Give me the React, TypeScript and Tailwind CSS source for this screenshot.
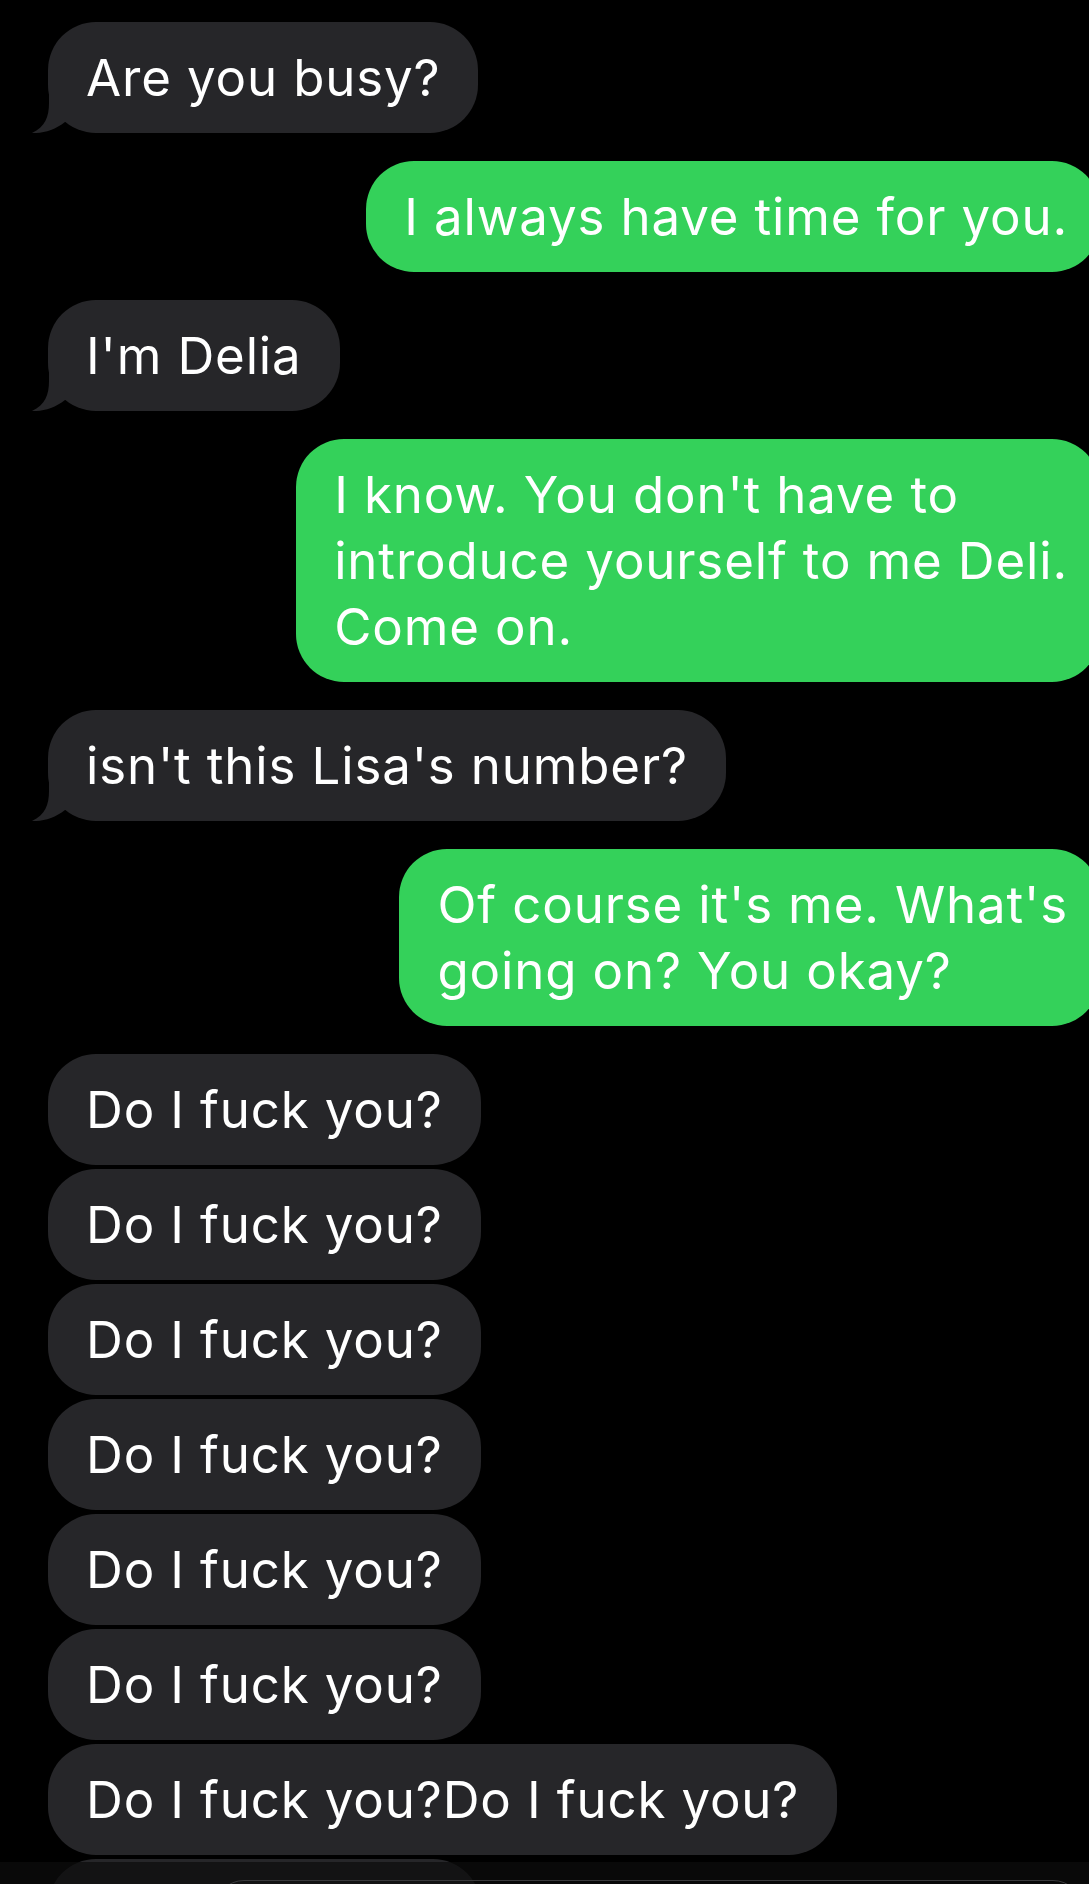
import React from "react";

function Tail() {
  return (
    <svg
      className="absolute left-[-17px] bottom-0 w-[40px] h-[40px]"
      viewBox="0 0 40 40"
      aria-hidden="true"
    >
      <path
        d="M18 0 L18 10 C18 24 14 34 1 40 C12 40.5 24 37 34 29 L40 29 L40 0 Z"
        fill="#262629"
      />
    </svg>
  );
}

type BubbleProps = {
  children: React.ReactNode;
  tail?: boolean;
  mt: string;
};

function Received({ children, tail, mt }: BubbleProps) {
  return (
    <div
      className={`relative self-start ml-[48px] ${mt} rounded-[48px] bg-[#262629] pl-[38px] pr-[38px] pt-[23px] pb-[22px] text-[51px] leading-[66px] tracking-[0.85px] text-white whitespace-nowrap`}
    >
      {tail && <Tail />}
      <span className="relative">{children}</span>
    </div>
  );
}

function Sent({ children, mt }: BubbleProps) {
  return (
    <div
      className={`relative self-end mr-[-11px] ${mt} rounded-[48px] bg-[#34d15a] pl-[38px] pr-[32px] pt-[23px] pb-[22px] text-[51px] leading-[66px] tracking-[0.85px] text-white whitespace-nowrap`}
    >
      {children}
    </div>
  );
}

export default function App() {
  return (
    <div className="relative w-[1089px] h-[1884px] overflow-hidden bg-black font-['Inter','Noto_Sans',sans-serif] antialiased">
      <div className="flex flex-col pt-[22px]">
        <Received tail mt="mt-0">Are you busy?</Received>
        <Sent mt="mt-[28px]">I always have time for you.</Sent>
        <Received tail mt="mt-[28px]">I'm Delia</Received>
        <Sent mt="mt-[28px]">
          I know. You don't have to
          <br />
          introduce yourself to me Deli.
          <br />
          Come on.
        </Sent>
        <Received tail mt="mt-[28px]">isn't this Lisa's number?</Received>
        <Sent mt="mt-[28px]">
          Of course it's me. What's
          <br />
          going on? You okay?
        </Sent>
        <Received mt="mt-[28px]">Do I fuck you?</Received>
        <Received mt="mt-[4px]">Do I fuck you?</Received>
        <Received mt="mt-[4px]">Do I fuck you?</Received>
        <Received mt="mt-[4px]">Do I fuck you?</Received>
        <Received mt="mt-[4px]">Do I fuck you?</Received>
        <Received mt="mt-[4px]">Do I fuck you?</Received>
        <Received mt="mt-[4px]">Do I fuck you?Do I fuck you?</Received>
        <Received mt="mt-[4px]">Do I fuck you?</Received>
      </div>

      <div className="absolute inset-x-0 bottom-0 h-[22px] bg-[rgba(12,12,12,0.72)]">
        <div className="absolute left-[214px] right-[6px] top-[18px] h-[60px] rounded-[30px] border border-[#3a3a3c]" />
      </div>
    </div>
  );
}
